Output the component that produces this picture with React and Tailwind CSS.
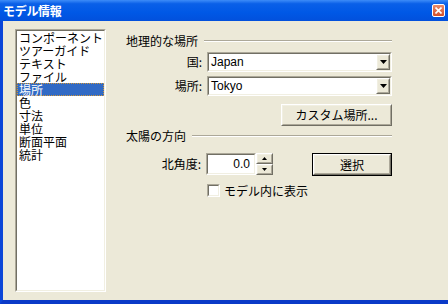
import React from "react";

const jp = { fontFamily: '"Noto Sans CJK JP", "Liberation Sans", sans-serif' };
const lat = { fontFamily: '"Liberation Sans", "Noto Sans CJK JP", sans-serif' };

function Sunken({ className = "", innerClass = "", children }) {
  return (
    <div className={"border border-t-[#aca899] border-l-[#aca899] border-b-white border-r-white " + className}>
      <div className={"h-full w-full border border-t-[#716f64] border-l-[#716f64] border-b-[#f1efe2] border-r-[#f1efe2] " + innerClass}>
        {children}
      </div>
    </div>
  );
}

function Raised({ className = "", innerClass = "", children }) {
  return (
    <div className={"border border-t-white border-l-white border-b-[#716f64] border-r-[#716f64] bg-[#ece9d8] " + className}>
      <div className={"h-full w-full border border-t-[#f1efe2] border-l-[#f1efe2] border-b-[#aca899] border-r-[#aca899] flex items-center justify-center " + innerClass}>
        {children}
      </div>
    </div>
  );
}

function DownArrow() {
  return (
    <svg width="7" height="4" viewBox="0 0 7 4">
      <path d="M0 0h7L3.5 4z" fill="#000" />
    </svg>
  );
}

function Combo({ value }) {
  return (
    <Sunken className="w-[185px] h-[20px]" innerClass="bg-white flex items-center">
      <span className="flex-1 pl-[2px] text-[12px] leading-none text-black" style={lat}>{value}</span>
      <Raised className="w-[14px] h-[16px] mr-[0px]" >
        <DownArrow />
      </Raised>
    </Sunken>
  );
}

function GroupHeader({ label }) {
  return (
    <div className="flex items-center h-[14px]">
      <span className="text-[12px] leading-none text-black whitespace-nowrap" style={jp}>{label}</span>
      <div className="flex-1 ml-[6px] border-t border-t-[#aca899] border-b border-b-white" />
    </div>
  );
}

const items = ["コンポーネント", "ツアーガイド", "テキスト", "ファイル", "場所", "色", "寸法", "単位", "断面平面", "統計"];

export default function App() {
  return (
    <div className="w-[448px] h-[304px] bg-[#ece9d8] flex flex-col overflow-hidden" style={jp}>
      {/* Title bar */}
      <div className="h-[21px] flex items-center bg-[linear-gradient(to_bottom,#3d8cf8_0%,#0a60e8_18%,#0058e6_60%,#0250dc_100%)] pl-[3px] pr-[3px]">
        <span className="flex-1 text-white font-bold text-[12px] leading-none tracking-[-0.3px] pt-[1px]" style={jp}>モデル情報</span>
        <div className="w-[13px] h-[13px] mr-[0px] rounded-[2px] border border-white bg-[linear-gradient(to_bottom,#e98a6a,#d4502a)] flex items-center justify-center">
          <svg width="7" height="7" viewBox="0 0 7 7">
            <path d="M0.5 0.5L6.5 6.5M6.5 0.5L0.5 6.5" stroke="#fff" strokeWidth="1.6" />
          </svg>
        </div>
      </div>

      {/* Body */}
      <div className="flex-1 flex border-l-[3px] border-l-[#0b46d8] border-b-[4px] border-b-[#0a3ac8]">
        {/* List */}
        <div className="ml-[12px] mt-[8px]">
          <Sunken className="w-[91px] h-[263px]" innerClass="bg-white pt-0">
            {items.map((it) =>
              it === "場所" ? (
                <div key={it} className="h-[13px] bg-[#316ac5] text-white text-[12px] leading-[11px] pl-[1px] border border-dotted border-[#ce953a]" style={jp}>
                  {it}
                </div>
              ) : (
                <div key={it} className="h-[13px] text-black text-[12px] leading-[13px] pl-[2px] whitespace-nowrap" style={jp}>
                  {it}
                </div>
              )
            )}
          </Sunken>
        </div>

        {/* Right panel */}
        <div className="ml-[20px] mt-[13px] w-[266px] flex flex-col">
          <GroupHeader label="地理的な場所" />

          <div className="mt-[4px] flex items-center">
            <span className="w-[76px] text-right text-[12px] leading-none" style={jp}>国:</span>
            <div className="ml-[5px]"><Combo value="Japan" /></div>
          </div>
          <div className="mt-[4px] flex items-center">
            <span className="w-[76px] text-right text-[12px] leading-none" style={jp}>場所:</span>
            <div className="ml-[5px]"><Combo value="Tokyo" /></div>
          </div>

          <div className="mt-[8px] flex justify-end pr-[0px]">
            <Raised className="w-[111px] h-[22px]">
              <span className="text-[12px] leading-none text-black" style={jp}>カスタム場所...</span>
            </Raised>
          </div>

          <div className="mt-[3px]">
            <GroupHeader label="太陽の方向" />
          </div>

          <div className="mt-[10px] flex items-start">
            <span className="w-[76px] h-[22px] flex items-center justify-end text-[12px] leading-none" style={jp}>北角度:</span>
            <div className="ml-[5px] flex">
              <Sunken className="w-[50px] h-[22px]" innerClass="bg-white flex items-center justify-end pr-[4px]">
                <span className="text-[12px] leading-none" style={lat}>0.0</span>
              </Sunken>
              <div className="flex flex-col">
                <Raised className="w-[17px] h-[11px]">
                  <svg width="5" height="3" viewBox="0 0 5 3"><path d="M2.5 0L5 3H0z" fill="#000" /></svg>
                </Raised>
                <Raised className="w-[17px] h-[11px]">
                  <svg width="5" height="3" viewBox="0 0 5 3"><path d="M0 0h5L2.5 3z" fill="#000" /></svg>
                </Raised>
              </div>
            </div>
            <div className="ml-[39px] border border-black w-[81px] h-[23px]">
              <Raised className="w-full h-full">
                <span className="text-[12px] leading-none text-black" style={jp}>選択</span>
              </Raised>
            </div>
          </div>

          <div className="mt-[8px] ml-[81px] flex items-center">
            <Sunken className="w-[13px] h-[13px]" innerClass="bg-white" />
            <span className="ml-[4px] text-[12px] leading-none text-black" style={jp}>モデル内に表示</span>
          </div>
        </div>
      </div>
    </div>
  );
}
